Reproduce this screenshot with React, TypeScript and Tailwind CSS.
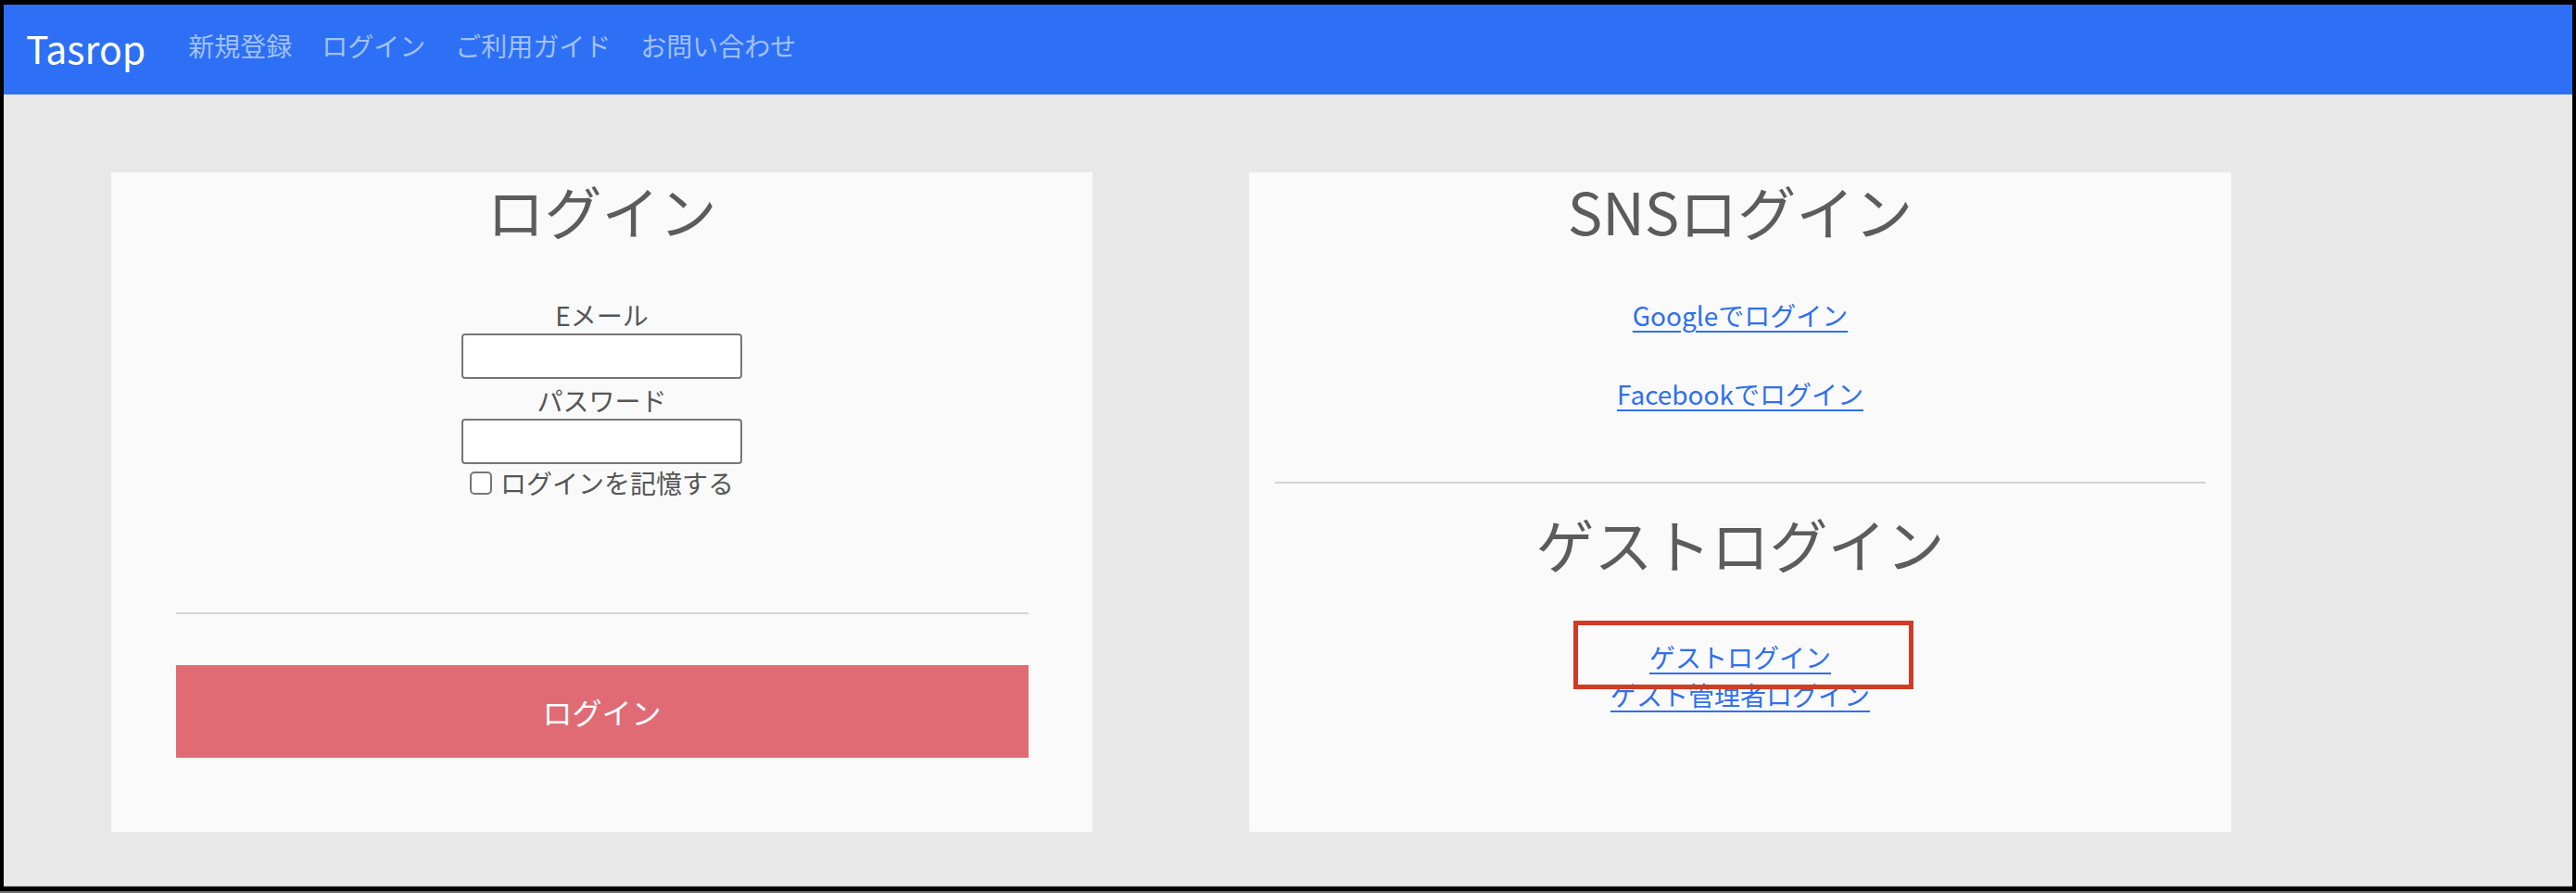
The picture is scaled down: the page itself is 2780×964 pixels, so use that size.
import React from 'react';

const font = { fontFamily: '"Noto Sans CJK JP", "Noto Sans", sans-serif' };

const NAV_LINKS = ['新規登録', 'ログイン', 'ご利用ガイド', 'お問い合わせ'];

const Navbar: React.FC = () => (
  <nav className="h-[97px] bg-[#2d70f5] flex items-center pl-[24px]">
    <a href="#" className="text-white text-[41px] leading-none mr-[46px] -mt-[4px]">
      Tasrop
    </a>
    <ul className="flex items-center gap-[32px] -mt-[6px]">
      {NAV_LINKS.map((l) => (
        <li key={l}>
          <a href="#" className="text-[#a3c0fa] text-[28px] leading-none">
            {l}
          </a>
        </li>
      ))}
    </ul>
  </nav>
);

const Field: React.FC<{ label: string; type: string; first?: boolean }> = ({ label, type, first }) => (
  <>
    <label className={`text-[28px] leading-[28px] text-[#555] ${first ? 'mt-[68px]' : 'mt-[9px]'}`}>{label}</label>
    <input
      type={type}
      className="mt-[6px] w-[303px] h-[49px] bg-white border-2 border-[#767676] rounded-[4px]"
    />
  </>
);

const LoginCard: React.FC = () => (
  <section className="w-[1059px] h-[712px] bg-[#fafafa] flex flex-col items-center">
    <h1 className="mt-[10px] text-[62px] leading-[62px] text-[#5c5c5c]">ログイン</h1>
    <Field label="Eメール" type="email" first />
    <Field label="パスワード" type="password" />
    <label className="mt-[6px] flex items-center gap-[9px] text-[28px] leading-[28px] text-[#555]">
      <span className="w-[24px] h-[25px] border-2 border-[#767676] rounded-[5px] bg-white" />
      ログインを記憶する
    </label>
    <hr className="mt-[126px] w-[920px] border-0 h-[2px] bg-[#d3d3d3]" />
    <button className="mt-[55px] w-[920px] h-[100px] bg-[#e16b75] text-white text-[32px] leading-none">
      ログイン
    </button>
  </section>
);

const linkCls = 'text-[#2f6fef] underline decoration-2 underline-offset-[5px] text-[28px] leading-[28px]';

const SnsCard: React.FC = () => (
  <section className="w-[1060px] h-[712px] bg-[#fafafa] flex flex-col items-center">
    <h1 className="mt-[9px] text-[63px] leading-[63px] text-[#5c5c5c]">SNSログイン</h1>
    <a href="#" className={`mt-[68px] ${linkCls}`}>Googleでログイン</a>
    <a href="#" className={`mt-[57px] ${linkCls}`}>Facebookでログイン</a>
    <hr className="mt-[81px] w-[1004px] border-0 h-[2px] bg-[#d3d3d3]" />
    <h1 className="mt-[32px] text-[63px] leading-[63px] text-[#5c5c5c]">ゲストログイン</h1>
    <div className="relative mt-[78px] flex flex-col items-center">
      <a href="#" className={linkCls}>ゲストログイン</a>
      <a href="#" className={`mt-[13px] ${linkCls}`}>ゲスト管理者ログイン</a>
      <div className="absolute left-1/2 -translate-x-[180px] -top-[25px] w-[367px] h-[74px] border-[5px] border-[#d13b24]" />
    </div>
  </section>
);

export default function App() {
  return (
    <div className="w-[2780px] h-[964px] bg-black flex flex-col" style={font}>
      <div className="mt-[5px] mx-[4px] h-[952px] flex flex-col bg-[#e8e8e8]">
        <Navbar />
        <main className="flex-1 flex items-start pt-[84px] pl-[116px] gap-[169px]">
          <LoginCard />
          <SnsCard />
        </main>
        <div className="h-[1px] bg-[#c8c8c8]" />
      </div>
      <div className="mt-auto h-[2px] bg-[#707070]" />
    </div>
  );
}
